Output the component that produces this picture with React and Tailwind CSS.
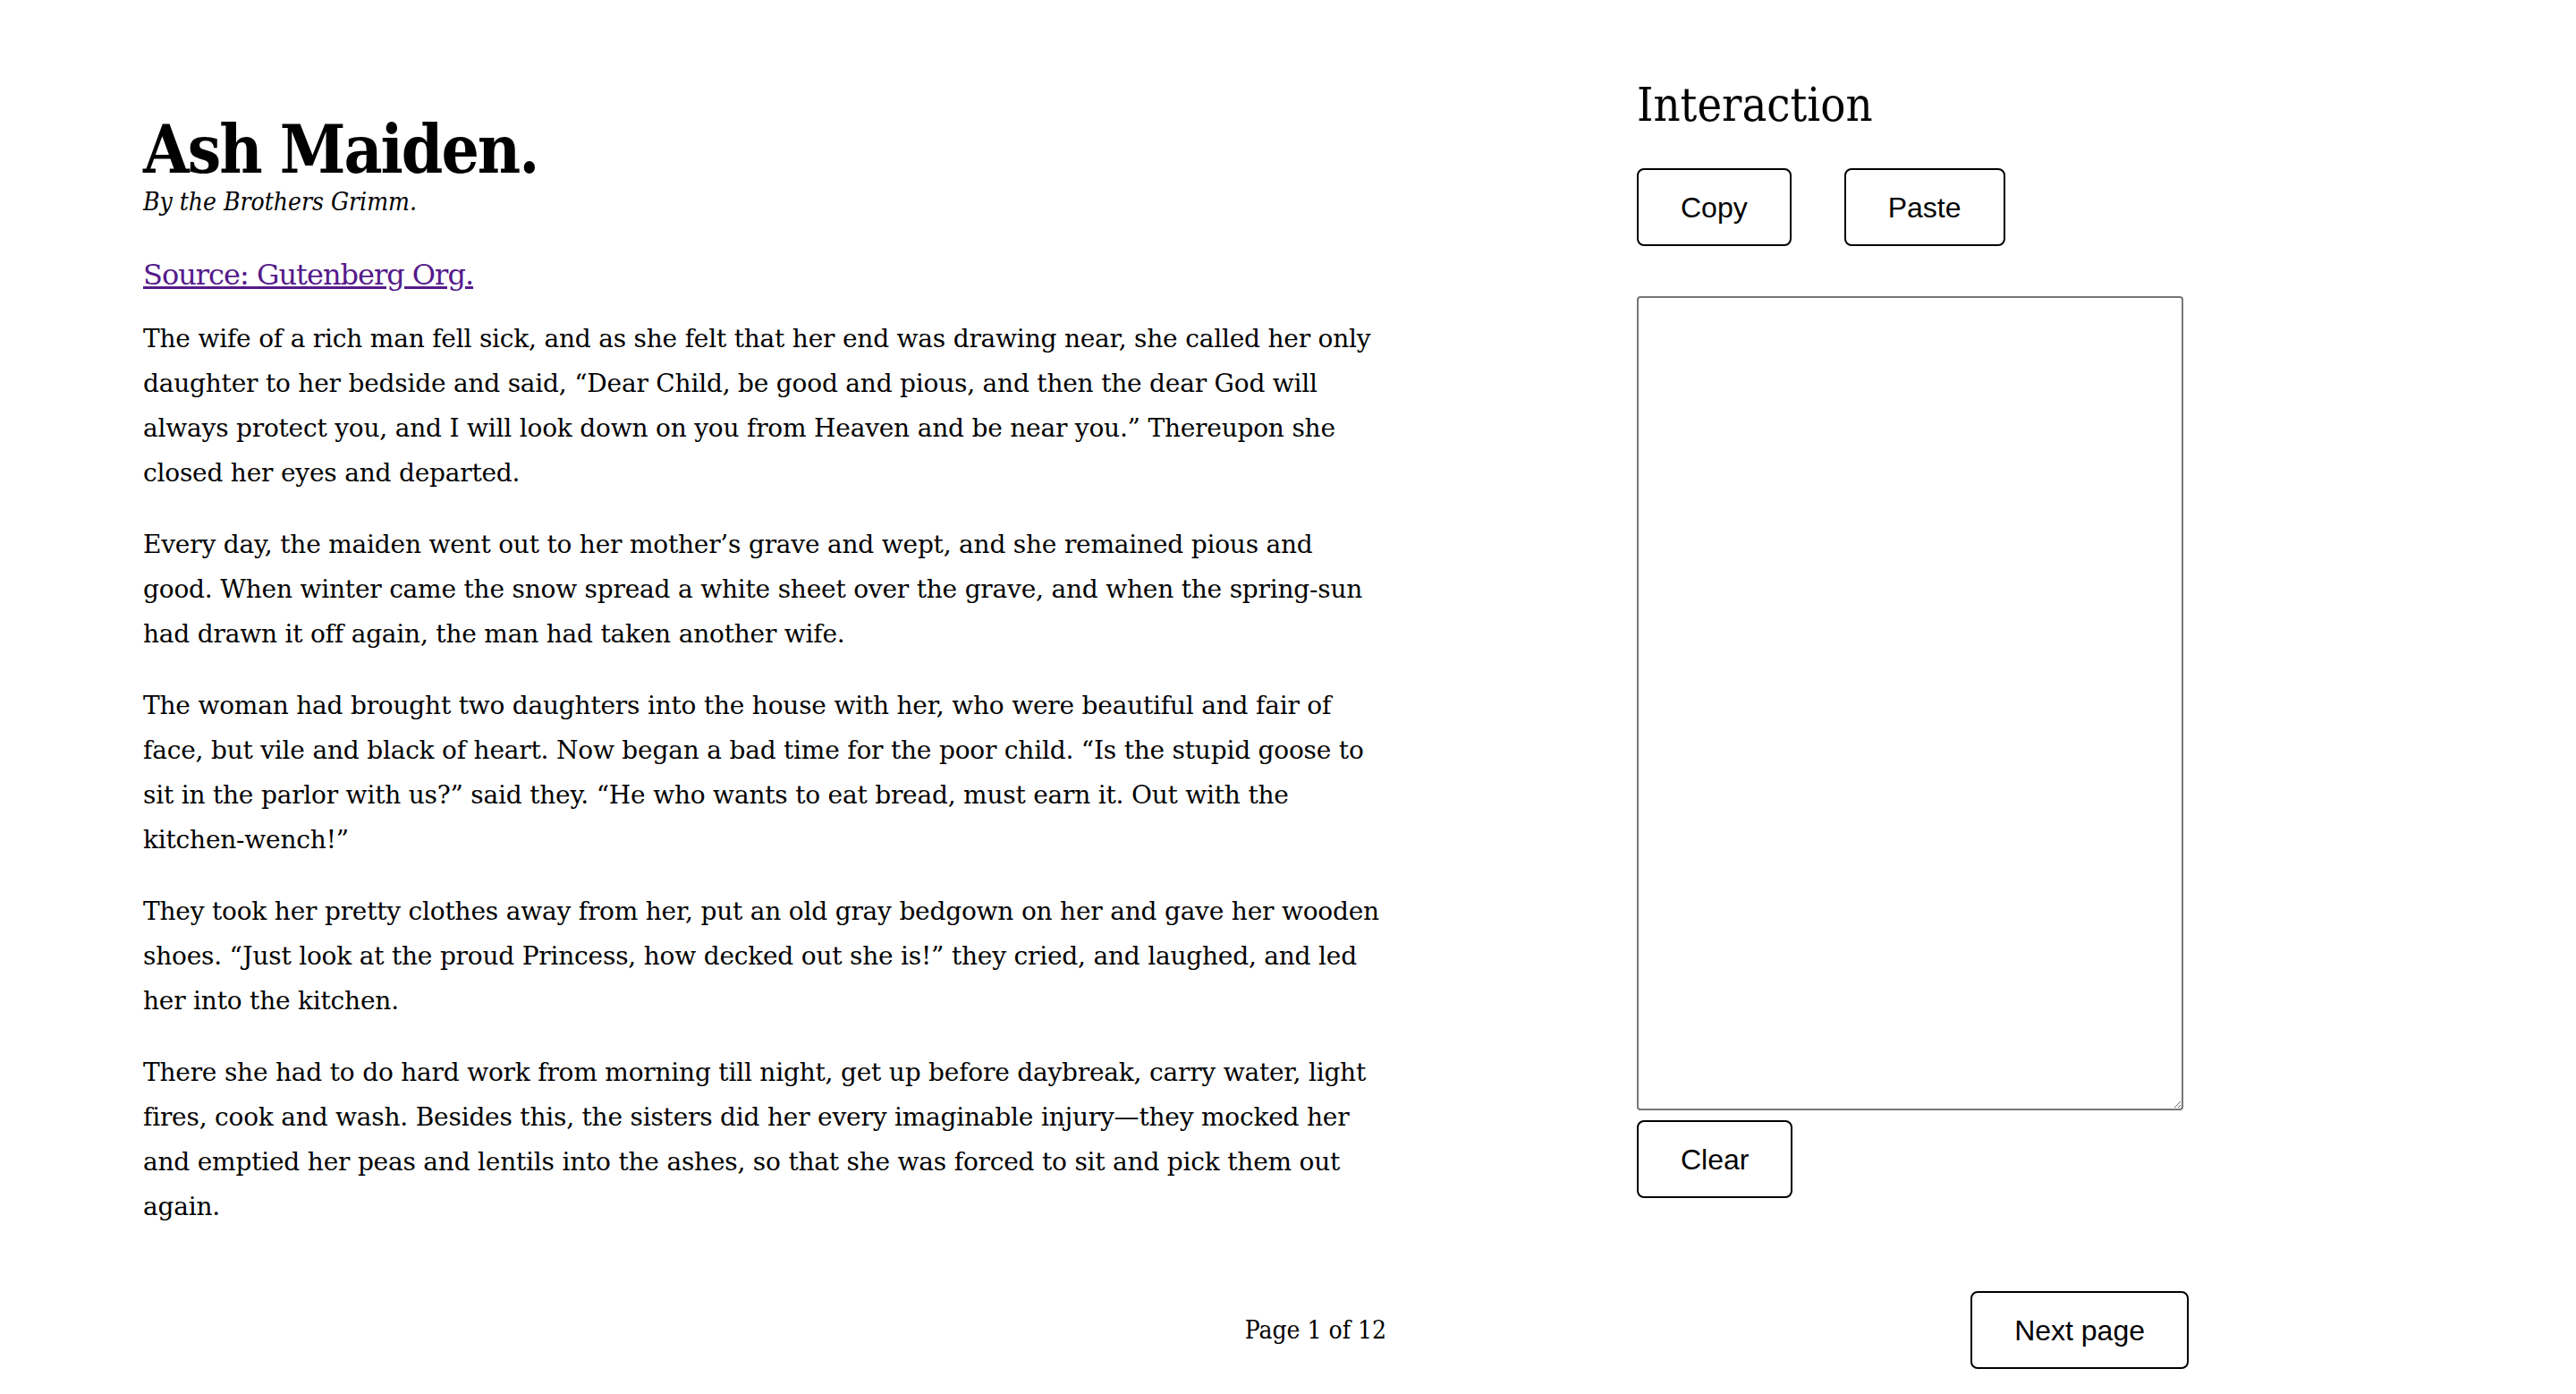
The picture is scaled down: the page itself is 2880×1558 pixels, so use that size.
import React, { useState } from 'react';

const serif = { fontFamily: '"DejaVu Serif", "Liberation Serif", serif' };
const condensed = { fontFamily: '"DejaVu Serif Condensed", "DejaVu Serif", serif', fontStretch: 'condensed' };

const paragraphs = [
  'The wife of a rich man fell sick, and as she felt that her end was drawing near, she called her only daughter to her bedside and said, \u201CDear Child, be good and pious, and then the dear God will always protect you, and I will look down on you from Heaven and be near you.\u201D Thereupon she closed her eyes and departed.',
  'Every day, the maiden went out to her mother\u2019s grave and wept, and she remained pious and good. When winter came the snow spread a white sheet over the grave, and when the spring-sun had drawn it off again, the man had taken another wife.',
  'The woman had brought two daughters into the house with her, who were beautiful and fair of face, but vile and black of heart. Now began a bad time for the poor child. \u201CIs the stupid goose to sit in the parlor with us?\u201D said they. \u201CHe who wants to eat bread, must earn it. Out with the kitchen-wench!\u201D',
  'They took her pretty clothes away from her, put an old gray bedgown on her and gave her wooden shoes. \u201CJust look at the proud Princess, how decked out she is!\u201D they cried, and laughed, and led her into the kitchen.',
  'There she had to do hard work from morning till night, get up before daybreak, carry water, light fires, cook and wash. Besides this, the sisters did her every imaginable injury\u2014they mocked her and emptied her peas and lentils into the ashes, so that she was forced to sit and pick them out again.',
];

const Button = ({ children, onClick }) => (
  <button
    onClick={onClick}
    className="h-[87px] px-[47px] border-2 border-black rounded-[8px] bg-white text-black text-[32px] leading-none font-['Liberation_Sans',Arial,sans-serif]"
  >
    {children}
  </button>
);

const App = () => {
  const [notes, setNotes] = useState('');

  return (
    <div className="min-h-screen bg-white text-black pl-[160px] pt-[87px]" style={serif}>
      <div className="flex items-start gap-[280px]">
        {/* story column */}
        <div className="w-[1390px] pt-[40px]">
          <h1 className="text-[74px] leading-[80px] font-bold tracking-[-2px]" style={condensed}>
            Ash Maiden.
          </h1>
          <p className="mt-[2px] text-[28px] leading-[34px] italic" style={condensed}>
            By the Brothers Grimm.
          </p>
          <a href="#" className="block mt-[44px] text-[32px] leading-[40px] tracking-[-1px] text-[#551a8b] underline w-fit">
            Source: Gutenberg Org.
          </a>
          <div className="mt-[27px] w-[1386px] flex flex-col gap-[30px]">
            {paragraphs.map((text, i) => (
              <p key={i} className="text-[28px] leading-[50px] tracking-[-0.2px]">
                {text}
              </p>
            ))}
          </div>
        </div>

        {/* interaction column */}
        <div className="w-[617px] flex flex-col items-start">
          <h2 className="text-[52px] leading-[60px] font-normal" style={condensed}>
            Interaction
          </h2>
          <div className="mt-[41px] flex gap-[59px]">
            <Button>Copy</Button>
            <Button>Paste</Button>
          </div>
          <textarea
            value={notes}
            onChange={(e) => setNotes(e.target.value)}
            className="block mt-[56px] w-[611px] h-[910px] border-2 border-[#767676] rounded-[4px] bg-white p-2 text-[26px]"
          />
          <div className="mt-[11px]">
            <Button onClick={() => setNotes('')}>Clear</Button>
          </div>
        </div>
      </div>

      {/* pager */}
      <div className="mt-[69px] flex items-center gap-[280px] pb-[27px]">
        <div className="w-[1390px] text-right text-[28px] leading-[40px]" style={condensed}>
          Page 1 of 12
        </div>
        <div className="w-[617px] flex justify-end">
          <Button>Next page</Button>
        </div>
      </div>
    </div>
  );
};

export default App;
